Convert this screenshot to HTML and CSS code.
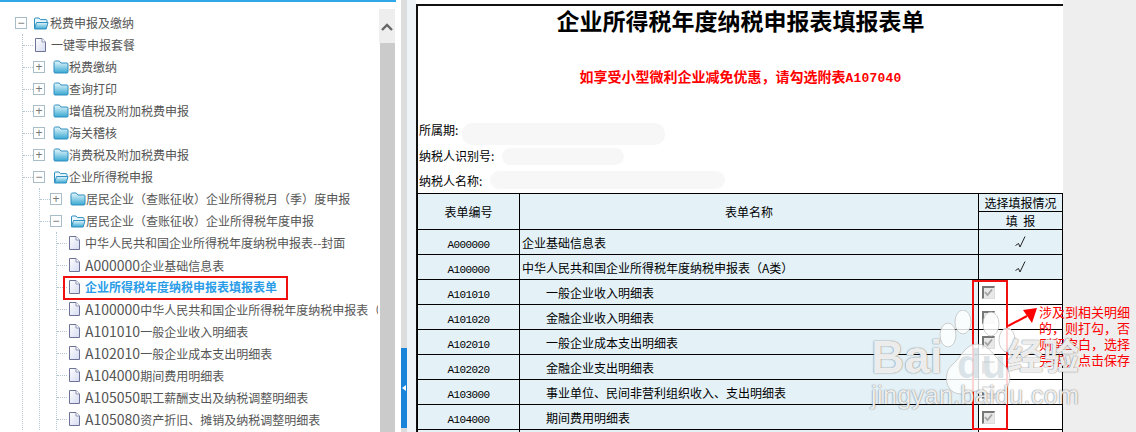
FILE: index.html
```html
<!DOCTYPE html>
<html lang="zh-CN">
<head>
<meta charset="utf-8">
<title>企业所得税年度纳税申报表填报表单</title>
<link rel="stylesheet" href="styles.css">
</head>
<body>
<svg class="defs" width="0" height="0" aria-hidden="true">
  <defs>
    <linearGradient id="fg" x1="0" y1="0" x2="0" y2="1"><stop offset="0" stop-color="#e6f6fb"/><stop offset="1" stop-color="#38a8d2"/></linearGradient>
    <linearGradient id="dg" x1="0" y1="0" x2="1" y2="1"><stop offset="0" stop-color="#ffffff"/><stop offset="1" stop-color="#d5daf0"/></linearGradient>
    <symbol id="folder" viewBox="0 0 16 14"><path d="M1 2.5C1 1.7 1.5 1 2.3 1h4L8 3h6c.6 0 1 .4 1 1v8c0 .6-.4 1-1 1H2c-.6 0-1-.4-1-1z" fill="url(#fg)" stroke="#2f8fc0"/></symbol>
    <symbol id="open" viewBox="0 0 16 14"><path d="M1.5 12V3c0-.7.4-1 1-1h3.500l1.400 1.600H13c.6 0 1 .4 1 1V6" fill="#eaf7fc" stroke="#2f8fc0"/><path d="M3.500 6.500H15l-1.800 6.500H1.500z" fill="url(#fg)" stroke="#2f8fc0"/></symbol>
    <symbol id="doc" viewBox="0 0 11 14"><path d="M.5.500H7L10.500 4v9.500H.5z" fill="url(#dg)" stroke="#6d7397"/><path d="M7 .5V4h3.500" fill="#fff" stroke="#8f94b3"/></symbol>
    <symbol id="tick" viewBox="0 0 13 13"><path d="M3 6l2.500 3L10 3.500" fill="none" stroke="#a4a4a4" stroke-width="1.800"/></symbol>
    <symbol id="mark" viewBox="0 0 11 12"><path d="M.5 9.500L3.500 7.500 5 11 10 .5" fill="none" stroke="#222" stroke-width="1"/></symbol>
  </defs>
</svg>
<div class="page">
  <aside class="left">
    <div class="topbar"></div>
    <div class="left-body">
      <nav class="tree">
        <div class="row"><span class="box">−</span><svg class="ic"><use href="#open"/></svg>税费申报及缴纳</div>
        <ul class="list">
          <li><div class="row"><svg class="dc"><use href="#doc"/></svg>一键零申报套餐</div></li>
          <li><div class="row"><span class="box">+</span><svg class="ic gapped"><use href="#folder"/></svg>税费缴纳</div></li>
          <li><div class="row"><span class="box">+</span><svg class="ic gapped"><use href="#folder"/></svg>查询打印</div></li>
          <li><div class="row"><span class="box">+</span><svg class="ic gapped"><use href="#folder"/></svg>增值税及附加税费申报</div></li>
          <li><div class="row"><span class="box">+</span><svg class="ic gapped"><use href="#folder"/></svg>海关稽核</div></li>
          <li><div class="row"><span class="box">+</span><svg class="ic gapped"><use href="#folder"/></svg>消费税及附加税费申报</div></li>
          <li><div class="row"><span class="box">−</span><svg class="ic gapped"><use href="#open"/></svg>企业所得税申报</div>
            <ul class="list sub">
              <li><div class="row"><span class="box">+</span><svg class="ic gapped"><use href="#folder"/></svg><span>居民企业<span class="pn">（</span>查账征收<span class="pn">）</span>企业所得税月<span class="pn">（</span>季<span class="pn">）</span>度申报</span></div></li>
              <li><div class="row"><span class="box">−</span><svg class="ic gapped"><use href="#open"/></svg><span>居民企业<span class="pn">（</span>查账征收<span class="pn">）</span>企业所得税年度申报</span></div>
                <ul class="list sub">
                  <li><div class="row"><svg class="dc"><use href="#doc"/></svg>中华人民共和国企业所得税年度纳税申报表--封面</div></li>
                  <li><div class="row"><svg class="dc"><use href="#doc"/></svg><span><span class="lt">A000000</span>企业基础信息表</span></div></li>
                  <li><div class="row active"><svg class="dc"><use href="#doc"/></svg>企业所得税年度纳税申报表填报表单</div></li>
                  <li><div class="row"><svg class="dc"><use href="#doc"/></svg><span><span class="lt">A100000</span>中华人民共和国企业所得税年度纳税申报表<span class="pn">（</span></span></div></li>
                  <li><div class="row"><svg class="dc"><use href="#doc"/></svg><span><span class="lt">A101010</span>一般企业收入明细表</span></div></li>
                  <li><div class="row"><svg class="dc"><use href="#doc"/></svg><span><span class="lt">A102010</span>一般企业成本支出明细表</span></div></li>
                  <li><div class="row"><svg class="dc"><use href="#doc"/></svg><span><span class="lt">A104000</span>期间费用明细表</span></div></li>
                  <li><div class="row"><svg class="dc"><use href="#doc"/></svg><span><span class="lt">A105050</span>职工薪酬支出及纳税调整明细表</span></div></li>
                  <li><div class="row"><svg class="dc"><use href="#doc"/></svg><span><span class="lt">A105080</span>资产折旧、摊销及纳税调整明细表</span></div></li>
                </ul>
              </li>
            </ul>
          </li>
        </ul>
      </nav>
      <div class="scrollbar">
        <div class="scroll-up"><svg width="12" height="8" viewBox="0 0 12 8"><path d="M1 7l5-5 5 5" fill="none" stroke="#666" stroke-width="2.400"/></svg></div>
        <div class="scroll-thumb"></div>
      </div>
    </div>
  </aside>
  <div class="splitter"><div class="split-handle"><span class="split-arrow"></span></div></div>
  <div class="strip"></div>
  <main class="form">
    <h1 class="title">企业所得税年度纳税申报表填报表单</h1>
    <p class="notice">如享受小型微利企业减免优惠，请勾选附表<span class="code">A107040</span></p>
    <div class="meta">
      <div class="meta-row">所属期:</div>
      <div class="meta-row">纳税人识别号:</div>
      <div class="meta-row">纳税人名称:</div>
    </div>
    <table class="grid">
      <colgroup><col class="c1"><col class="c2"><col class="c3"></colgroup>
      <tr class="h1"><th rowspan="2">表单编号</th><th rowspan="2">表单名称</th><th>选择填报情况</th></tr>
      <tr class="h2"><th>填&nbsp;&nbsp;报</th></tr>
      <tr><td class="num"><span class="lat">A000000</span></td><td class="nm">企业基础信息表</td><td class="mark"><svg class="mk"><use href="#mark"/></svg></td></tr>
      <tr><td class="num"><span class="lat">A100000</span></td><td class="nm">中华人民共和国企业所得税年度纳税申报表（A类）</td><td class="mark"><svg class="mk"><use href="#mark"/></svg></td></tr>
      <tr><td class="num"><span class="lat">A101010</span></td><td class="nm in">一般企业收入明细表</td><td class="chk"><span class="cb"><svg><use href="#tick"/></svg></span></td></tr>
      <tr><td class="num"><span class="lat">A101020</span></td><td class="nm in">金融企业收入明细表</td><td class="chk"><span class="cb"></span></td></tr>
      <tr><td class="num"><span class="lat">A102010</span></td><td class="nm in">一般企业成本支出明细表</td><td class="chk"><span class="cb"><svg><use href="#tick"/></svg></span></td></tr>
      <tr><td class="num"><span class="lat">A102020</span></td><td class="nm in">金融企业支出明细表</td><td class="chk"><span class="cb"></span></td></tr>
      <tr><td class="num"><span class="lat">A103000</span></td><td class="nm in">事业单位、民间非营利组织收入、支出明细表</td><td class="chk"><span class="cb"></span></td></tr>
      <tr><td class="num"><span class="lat">A104000</span></td><td class="nm in">期间费用明细表</td><td class="chk"><span class="cb"><svg><use href="#tick"/></svg></span></td></tr>
      <tr><td class="num"></td><td class="nm"></td><td class="chk"></td></tr>
    </table>
  </main>
  <div class="gutter"></div>

  <div class="blob b1"></div><div class="blob b2"></div><div class="blob b3"></div>
  <div class="red-box tree-hl"></div>
  <div class="red-box col-hl"></div>
  <svg class="arrow" width="36" height="26" viewBox="0 0 36 26"><path d="M3 20L22 10" stroke="#f00" stroke-width="2"/><path d="M18 4L32 2 27 17z" fill="#f00"/></svg>
  <p class="note">涉及到相关明细<br>的，则打勾，否<br>则留空白，选择<br>完毕，点击保存</p>

  <div class="wm">
    <svg class="paw" width="80" height="100" viewBox="0 0 80 100"><g fill="#fff" fill-opacity=".82" stroke="#b9b9b9" stroke-opacity=".7"><ellipse cx="11" cy="25" rx="8" ry="12"/><ellipse cx="26" cy="12" rx="8" ry="12"/><ellipse cx="54" cy="14" rx="8" ry="12"/><ellipse cx="70" cy="30" rx="8" ry="12"/><path d="M40 34c12 0 18 14 28 22 10 10 4 30-14 28-6-1-10-3-14-3s-9 3-16 3C8 84 6 64 14 56c10-8 14-22 26-22z"/></g></svg>
    <span class="wm-du">du</span>
    <span class="wm-bai">Bai</span>
    <span class="wm-jy">经验</span>
    <span class="wm-url">jingyan.baidu.com</span>
  </div>
</div>
</body>
</html>
```

FILE: styles.css
```css
* { box-sizing: border-box; }
html, body { margin: 0; padding: 0; height: 432px; overflow: hidden; background: #fff; }
body { font-family: "Noto Sans CJK SC", "Liberation Sans", sans-serif; font-size: 12px; }
.defs { position: absolute; }
.page { position: relative; display: flex; width: 1136px; height: 432px; overflow: hidden; }

.left { width: 401px; flex: none; display: flex; flex-direction: column; }
.topbar { width: 396px; height: 2px; background: #2fa8ea; flex: none; }
.left-body { display: flex; flex: 1; min-height: 0; }
.tree { width: 378px; flex: none; overflow: hidden; padding: 10px 0 0 15px; color: #555; line-height: 22px; }
.row { display: flex; align-items: center; height: 22px; white-space: nowrap; position: relative; }
.row.active { color: #2b9de8; font-weight: 700; }
.lt { font-size: 14px; }
.pn { font-family: "Noto Sans CJK TC", sans-serif; }
.list { list-style: none; margin: 0 0 0 7px; padding: 0 0 0 10px; border-left: 1px dotted #b5c7d2; }
.list.sub { margin-left: 6px; }
.list > li { position: relative; }
.list > li::before { content: ""; position: absolute; left: -10px; top: 11px; width: 10px; border-top: 1px dotted #b5c7d2; }
.box { width: 12px; height: 12px; flex: none; border: 1px solid #a9bdc9; background: #fff; color: #777; font: 12px/10px "Liberation Sans", sans-serif; text-align: center; position: relative; z-index: 1; }
.ic { width: 16px; height: 14px; flex: none; margin: 0 1px 0 6px; }
.ic.gapped { margin: 0 0 0 8px; }
.dc { width: 11px; height: 14px; flex: none; margin: 0 5px 0 2px; }

.scrollbar { width: 16px; margin: 7px 0 0 1px; display: flex; flex-direction: column; }
.scroll-up { height: 34px; background: #eee; display: flex; align-items: center; justify-content: center; padding-top: 2px; }
.scroll-thumb { flex: 1; margin-left: 1px; background: #cbcbcb; }

.splitter { width: 6px; flex: none; background: #ddd; padding-top: 348px; }
.split-handle { height: 80px; background: #1a84d8; display: flex; align-items: center; justify-content: center; }
.split-arrow { border-style: solid; border-width: 3px 4px 3px 0; border-color: transparent #fff transparent transparent; }
.strip { width: 9px; flex: none; background: #eff4f8; }

.form { width: 647px; flex: none; margin-top: 4px; background: #fff; border-top: 2px solid #111; border-left: 2px solid #111; font-family: "Noto Sans CJK SC", "Liberation Serif", serif; color: #000; display: flex; flex-direction: column; }
.title { margin: 0; font-size: 23px; line-height: 28px; font-weight: 700; text-align: center; color: #000; }
.notice { margin: 32px 0 0; font-size: 14px; line-height: 20px; font-weight: 700; color: #f00; text-align: center; }
.code { font-family: "Liberation Mono", monospace; font-size: 13px; letter-spacing: .2px; }
.meta { margin: 28px 0 -.5px; padding-left: 1px; }
.meta-row { height: 25.500px; line-height: 25px; }
.grid { width: 646px; margin-left: -1px; border-collapse: collapse; table-layout: fixed; border-top: 1px solid #000; font-size: 12px; }
.c1 { width: 102px; }
.c3 { width: 84px; }
.grid th, .grid td { border: 1px solid #000; padding: 0; background: #e4f2f8; font-weight: 400; text-align: center; overflow: hidden; white-space: nowrap; }
.grid tr { height: 25px; }
.grid tr.h1, .grid tr.h2 { height: 18px; }
.h1 th, .h2 th { line-height: 16px; }
.grid td.nm { text-align: left; padding-left: 2px; }
.grid td.in { padding-left: 26px; }
.lat { font-family: "Liberation Mono", monospace; font-size: 11px; letter-spacing: -.6px; }
.grid td.chk { background: #fff; text-align: left; padding-left: 3px; line-height: 0; }
.mark { line-height: 0; }
.mk { width: 11px; height: 12px; display: inline-block; vertical-align: middle; }
.cb { display: inline-block; width: 13px; height: 13px; background: #e8e8e8; border-top: 2px solid #777; border-left: 2px solid #777; border-right: 1px solid #ddd; border-bottom: 1px solid #ddd; position: relative; vertical-align: middle; }
.cb svg { position: absolute; left: -2px; top: -2px; width: 13px; height: 13px; }
.gutter { flex: 1; background: #eee; }

.blob { position: absolute; background: #f7f7f7; border-radius: 10px; }
.b1 { left: 462px; top: 123px; width: 203px; height: 22px; }
.b2 { left: 502px; top: 148px; width: 122px; height: 17px; }
.b3 { left: 490px; top: 171px; width: 235px; height: 18px; }

.red-box { position: absolute; border: 2px solid #f01010; }
.tree-hl { left: 63px; top: 276px; width: 225px; height: 24px; }
.col-hl { left: 972px; top: 280px; width: 36px; height: 150px; }
.arrow { position: absolute; left: 1005px; top: 306px; }
.note { position: absolute; left: 1039px; top: 304px; margin: 0; font-size: 13px; line-height: 16px; color: #f00; white-space: nowrap; }

.wm { position: absolute; left: 0; top: 0; width: 1136px; height: 432px; pointer-events: none; color: rgba(255,255,255,.88); text-shadow: 0 0 1px rgba(90,90,90,.8), 0 0 2px rgba(120,120,120,.5); font-family: "Liberation Sans", sans-serif; }
.paw { position: absolute; left: 937px; top: 310px; }
.wm-du { position: absolute; left: 957px; top: 342px; font-size: 40px; line-height: 44px; font-weight: 700; color: rgba(190,205,212,.55); text-shadow: none; }
.wm-bai { position: absolute; left: 871px; top: 332px; font-size: 46px; line-height: 50px; font-weight: 700; }
.wm-jy { position: absolute; left: 1007px; top: 332px; font-family: "Noto Sans CJK SC", sans-serif; font-size: 36px; line-height: 44px; font-weight: 700; }
.wm-url { position: absolute; left: 871px; top: 380px; font-size: 25px; line-height: 30px; letter-spacing: .4px; }
```
